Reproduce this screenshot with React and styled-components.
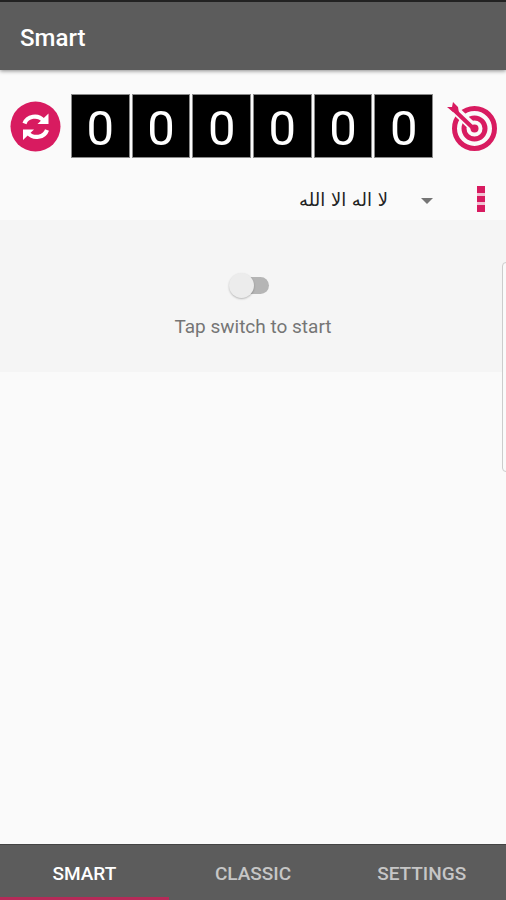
import React, { useState } from "react";
import styled, { createGlobalStyle } from "styled-components";

const accent = "#d81b60";

const GlobalStyle = createGlobalStyle`
  * { box-sizing: border-box; }
  body {
    margin: 0;
    background: #fafafa;
    font-family: Roboto, "Liberation Sans", sans-serif;
  }
`;

const Screen = styled.div`
  position: relative;
  display: flex;
  flex-direction: column;
  min-height: 100vh;
  overflow: hidden;
`;

const AppBar = styled.header`
  display: flex;
  align-items: center;
  height: 70px;
  padding: 4px 20px 0;
  background: #5c5c5c;
  border-top: 2px solid #222222;
  box-shadow: 0 1px 4px rgba(0, 0, 0, 0.45);
`;

const Title = styled.h1`
  margin: 0;
  font-size: 24px;
  line-height: 28px;
  font-weight: 500;
  color: #ffffff;
`;

const Main = styled.main`
  flex: 1;
`;

const CounterRow = styled.section`
  display: flex;
  align-items: center;
  gap: 10px;
  padding: 24px 8px 0 10px;
`;

const IconButton = styled.button`
  flex: none;
  display: flex;
  align-items: center;
  justify-content: flex-end;
  width: ${(p) => p.$width}px;
  height: ${(p) => p.$height}px;
  padding: 0;
  border: 0;
  background: none;
  color: ${accent};
  cursor: pointer;
`;

const Digits = styled.output`
  flex: 1;
  display: flex;
  gap: 2px;
  height: 64px;
`;

const Digit = styled.span`
  flex: 1;
  display: flex;
  align-items: center;
  justify-content: center;
  padding-top: 5px;
  border: 1px solid #8a8a8a;
  background: #000000;
  color: #ffffff;
  font-size: 49px;
  line-height: 56px;
`;

const PhraseRow = styled.section`
  display: flex;
  align-items: center;
  justify-content: flex-end;
  gap: 36px;
  height: 62px;
  padding: 20px 21px 0 20px;
`;

const SelectBox = styled.div`
  display: flex;
  align-items: center;
  padding-top: 4px;
  color: #757575;
`;

const PhraseSelect = styled.select`
  appearance: none;
  width: 160px;
  height: 32px;
  margin: 0 -12px 4px 0;
  padding: 0 45px 0 0;
  border: 0;
  background: none;
  color: #222222;
  font-family: "DejaVu Sans", sans-serif;
  font-size: 18px;
  cursor: pointer;
`;

const StartPanel = styled.section`
  display: flex;
  flex-direction: column;
  align-items: center;
  gap: 16px;
  padding: 52px 20px 33px;
  background: #f5f5f5;
`;

const Switch = styled.input`
  appearance: none;
  display: grid;
  align-items: center;
  width: 40px;
  height: 26px;
  margin: 0 8px 0 0;
  cursor: pointer;

  &::before,
  &::after {
    content: "";
    grid-area: 1 / 1;
  }

  &::before {
    height: 17px;
    margin-left: 4px;
    border-radius: 9px;
    background: #b5b5b5;
  }

  &::after {
    justify-self: ${(p) => (p.checked ? "end" : "start")};
    width: 25px;
    height: 25px;
    border-radius: 50%;
    background: ${(p) => (p.checked ? accent : "#ececec")};
    box-shadow: 0 1px 2px rgba(0, 0, 0, 0.25);
  }
`;

const SwitchLabel = styled.label`
  padding-top: 1px;
  font-size: 19px;
  line-height: 24px;
  color: #757575;
`;

const EdgeHandle = styled.aside`
  position: absolute;
  top: 262px;
  right: -4px;
  width: 8px;
  height: 210px;
  border: 1px solid #cccccc;
  border-radius: 4px;
  background: #fafafa;
`;

const TabBar = styled.nav`
  display: grid;
  grid-template-columns: repeat(3, 1fr);
  height: 56px;
  background: #5c5c5c;
  border-top: 1px solid #444444;
`;

const Tab = styled.button`
  padding: 5px 0 0;
  border: 0;
  border-bottom: 3px solid ${(p) => (p.$active ? "#b52a58" : "transparent")};
  background: none;
  color: ${(p) => (p.$active ? "#ffffff" : "#c6c6c6")};
  font-family: inherit;
  font-size: 19px;
  line-height: 24px;
  font-weight: 500;
  cursor: pointer;
`;

const RefreshIcon = () => (
  <svg width="51" height="51" viewBox="0 0 51 51" aria-hidden="true">
    <circle cx="25.5" cy="25.5" r="25" fill="currentColor" />
    <g fill="none" stroke="#fff" strokeWidth="4.2">
      <path d="M14.5 22.5C17 15 28 13 33.5 19.5" />
      <path d="M37 29C34.500 36.500 23.500 38.500 18 32" />
    </g>
    <path d="M38.500 12.500V23H27.500Z" fill="#fff" />
    <path d="M13 39V28.500H24Z" fill="#fff" />
  </svg>
);

const TargetIcon = () => (
  <svg width="51" height="51" viewBox="0 0 51 51" aria-hidden="true">
    <g fill="none" stroke="currentColor">
      <circle cx="27.5" cy="27.5" r="20" strokeWidth="5" />
      <circle cx="27.5" cy="27.5" r="10.5" strokeWidth="5" />
    </g>
    <path d="M6 7L27 27" stroke="#fafafa" strokeWidth="9" />
    <circle cx="27.5" cy="27.5" r="4" fill="currentColor" />
    <path d="M5 7L27 28" stroke="currentColor" strokeWidth="4" />
    <path d="M6 1L11 6L12 12L6 11L0 6L5 6Z" fill="currentColor" />
  </svg>
);

const CaretIcon = () => (
  <svg width="12" height="6" viewBox="0 0 12 6" aria-hidden="true">
    <path d="M0 0H12L6 6Z" fill="currentColor" />
  </svg>
);

const MoreIcon = () => (
  <svg width="8" height="26" viewBox="0 0 8 26" aria-hidden="true">
    <path d="M0 0H8V26H0Z" fill="currentColor" opacity="0.25" />
    <path d="M0 0H8V7H0ZM0 10H8V16H0ZM0 19H8V26H0Z" fill="currentColor" />
  </svg>
);

const tabs = ["SMART", "CLASSIC", "SETTINGS"];

export default function App() {
  const [active, setActive] = useState("SMART");
  const [running, setRunning] = useState(false);

  return (
    <Screen>
      <GlobalStyle />
      <AppBar>
        <Title>Smart</Title>
      </AppBar>
      <Main>
        <CounterRow>
          <IconButton $width={51} $height={51} aria-label="Reset counter">
            <RefreshIcon />
          </IconButton>
          <Digits aria-label="Count">
            {[..."000000"].map((digit, i) => (
              <Digit key={i}>{digit}</Digit>
            ))}
          </Digits>
          <IconButton $width={55} $height={51} aria-label="Set target">
            <TargetIcon />
          </IconButton>
        </CounterRow>
        <PhraseRow>
          <SelectBox>
            <PhraseSelect dir="rtl" aria-label="Phrase">
              <option>لا اله الا الله</option>
            </PhraseSelect>
            <CaretIcon />
          </SelectBox>
          <IconButton $width={16} $height={26} aria-label="More options">
            <MoreIcon />
          </IconButton>
        </PhraseRow>
        <StartPanel>
          <Switch
            id="start"
            type="checkbox"
            role="switch"
            checked={running}
            onChange={(e) => setRunning(e.target.checked)}
          />
          <SwitchLabel htmlFor="start">Tap switch to start</SwitchLabel>
        </StartPanel>
      </Main>
      <EdgeHandle />
      <TabBar>
        {tabs.map((name) => (
          <Tab
            key={name}
            $active={name === active}
            aria-current={name === active ? "page" : undefined}
            onClick={() => setActive(name)}
          >
            {name}
          </Tab>
        ))}
      </TabBar>
    </Screen>
  );
}
